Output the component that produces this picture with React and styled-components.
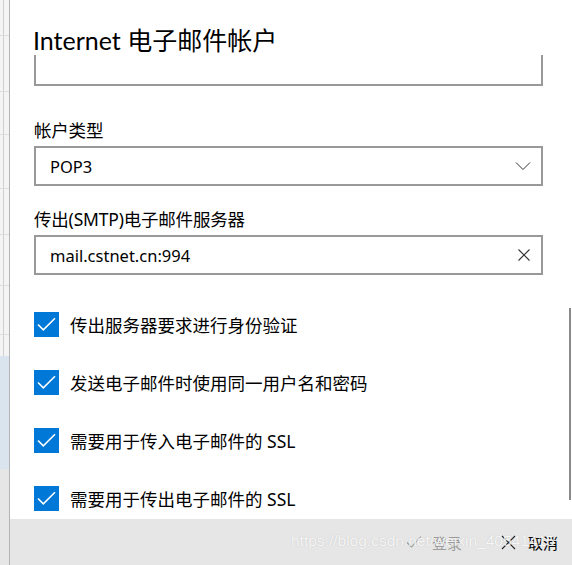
import * as React from 'react'
import styled, { createGlobalStyle } from 'styled-components'

const GlobalStyle = createGlobalStyle`
  html, body {
    margin: 0;
    padding: 0;
    overflow: hidden;
    background: #ffffff;
  }
  body {
    font-family: "Noto Sans", "Noto Sans CJK SC", sans-serif;
    color: #000;
  }
`

const Screen = styled.div`
  display: flex;
  width: 572px;
  height: 565px;
  overflow: hidden;
`

// the app window that peeks out behind the dialog
const Backdrop = styled.div`
  width: 9px;
  flex-shrink: 0;
  display: flex;
  flex-direction: column;
  background: #f4f4f4;
  border-right: 1px solid #b4b4b4;
  box-shadow: inset 3px 0 0 #f4f4f4, inset 4px 0 0 #cfcfcf;
`

const BackdropRow = styled.div`
  height: ${p => p.h}px;
  flex-shrink: 0;
  background: ${p => (p.selected ? '#d9e4ef' : p.footer ? '#e6e6e6' : 'transparent')};
  border-bottom: 1px solid ${p => (p.line ? '#dddddd' : 'transparent')};
`

const Dialog = styled.div`
  flex: 1;
  display: flex;
  flex-direction: column;
  background: #ffffff;
  min-width: 0;
`

const Header = styled.header`
  height: 55px;
  flex-shrink: 0;
  padding: 25px 0 0 23px;
  box-sizing: border-box;
  font-family: "Lato", "Noto Sans CJK SC", sans-serif;
  font-size: 25px;
  line-height: 30px;
`

const Body = styled.div`
  flex: 1;
  position: relative;
  overflow: hidden;
  padding: 0 29px 0 24px;
`

const Content = styled.div`
  margin-top: -9px;
  display: flex;
  flex-direction: column;
`

const Field = styled.div`
  display: flex;
  flex-direction: column;
  gap: 4px;
  margin-top: ${p => p.top || 0}px;
`

const Label = styled.label`
  font-size: 17.5px;
  line-height: 24px;
  height: 24px;
  letter-spacing: -0.2px;
`

const Box = styled.div`
  height: 40px;
  box-sizing: border-box;
  border: 2px solid #999999;
  display: flex;
  align-items: center;
  justify-content: space-between;
  padding: 0 10px 0 14px;
  font-size: 16.5px;
`

const BoxIcon = styled.svg`
  flex-shrink: 0;
  display: block;
`

const Checks = styled.div`
  display: flex;
  flex-direction: column;
  gap: 33px;
  margin-top: 37px;
`

const CheckRow = styled.div`
  display: flex;
  align-items: center;
  gap: 11px;
  height: 25px;
  font-size: 17.5px;
`

const CheckBox = styled.span`
  width: 25px;
  height: 25px;
  background: #0078d7;
  display: flex;
  align-items: center;
  justify-content: center;
  flex-shrink: 0;
`

const Scrollbar = styled.div`
  position: absolute;
  right: 1px;
  top: 253px;
  width: 2px;
  height: 192px;
  background: #8a8a8a;
`

const Footer = styled.footer`
  height: 46px;
  flex-shrink: 0;
  position: relative;
  background: #e6e6e6;
  display: flex;
  align-items: center;
  justify-content: flex-end;
  gap: 39px;
  padding-right: 14px;
`

const FooterButton = styled.button`
  display: flex;
  align-items: center;
  gap: ${p => (p.disabled ? 10 : 12)}px;
  border: none;
  background: none;
  padding: 0;
  font-family: inherit;
  font-size: 15px;
  color: ${p => (p.disabled ? '#9d9d9d' : '#000000')};
`

const Watermark = styled.div`
  position: absolute;
  left: 281px;
  top: 13px;
  font-family: "Liberation Sans", sans-serif;
  font-size: 15.5px;
  color: rgba(255, 255, 255, 0.85);
  text-shadow: 0 0 1px rgba(150, 150, 150, 0.5);
  white-space: nowrap;
  pointer-events: none;
`

function Check() {
  return (
    <svg width="25" height="25" viewBox="0 0 25 25">
      <path d="M4 12.5 L9.3 17.8 L21 6.2" fill="none" stroke="#fff" strokeWidth="1.6" />
    </svg>
  )
}

function Chevron() {
  return (
    <BoxIcon width="16" height="10" viewBox="0 0 16 10">
      <path d="M1 1.5 L8 8.5 L15 1.5" fill="none" stroke="#333" strokeWidth="1" />
    </BoxIcon>
  )
}

function Clear() {
  return (
    <BoxIcon width="14" height="14" viewBox="0 0 14 14">
      <path d="M1.5 1.5 L12.5 12.5 M12.5 1.5 L1.5 12.5" fill="none" stroke="#333" strokeWidth="1.1" />
    </BoxIcon>
  )
}

const options = [
  '传出服务器要求进行身份验证',
  '发送电子邮件时使用同一用户名和密码',
  '需要用于传入电子邮件的 SSL',
  '需要用于传出电子邮件的 SSL'
]

const backdropRows = [
  { h: 35, line: true },
  { h: 55, line: true },
  { h: 42, line: true },
  { h: 53, line: true },
  { h: 45, line: true },
  { h: 50, line: true },
  { h: 48, line: true },
  { h: 20 },
  { h: 112, selected: true },
  { h: 105, footer: true }
]

export default function App() {
  return (
    <>
      <GlobalStyle />
      <Screen>
        <Backdrop>
          {backdropRows.map((r, i) => (
            <BackdropRow key={i} {...r} />
          ))}
        </Backdrop>
        <Dialog>
          <Header>Internet 电子邮件帐户</Header>
          <Body>
            <Content>
              <Box />
              <Field top={32}>
                <Label>帐户类型</Label>
                <Box>
                  POP3
                  <Chevron />
                </Box>
              </Field>
              <Field top={21}>
                <Label>传出(SMTP)电子邮件服务器</Label>
                <Box>
                  mail.cstnet.cn:994
                  <Clear />
                </Box>
              </Field>
              <Checks>
                {options.map(text => (
                  <CheckRow key={text}>
                    <CheckBox>
                      <Check />
                    </CheckBox>
                    {text}
                  </CheckRow>
                ))}
              </Checks>
            </Content>
            <Scrollbar />
          </Body>
          <Footer>
            <FooterButton disabled>
              <svg width="16" height="14" viewBox="0 0 16 14">
                <path d="M1 7.5 L5.5 12 L15 1.5" fill="none" stroke="#9d9d9d" strokeWidth="1.1" />
              </svg>
              登录
            </FooterButton>
            <FooterButton>
              <svg width="15" height="15" viewBox="0 0 15 15">
                <path d="M1 1 L14 14 M14 1 L1 14" fill="none" stroke="#222" strokeWidth="1.1" />
              </svg>
              取消
            </FooterButton>
            <Watermark>https://blog.csdn.net/weixin_40541415</Watermark>
          </Footer>
        </Dialog>
      </Screen>
    </>
  )
}
